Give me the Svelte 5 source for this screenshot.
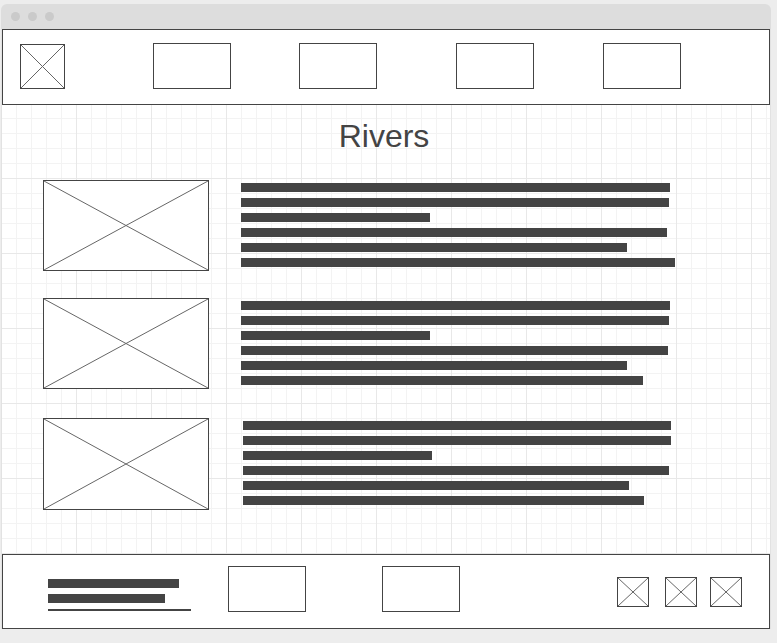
<script>
  const links = ['One', 'Two', 'Three', 'Four'];
  const footerLinks = ['About', 'Contact'];
  const socials = ['First', 'Second', 'Third'];
  // Line lengths, in percent of the text column
  const rows = [
    { tall: false, lines: [85.8, 85.6, 37.8, 85.2, 77.2, 86.8] },
    { tall: false, lines: [85.8, 85.6, 37.8, 85.4, 77.2, 80.4] },
    { tall: true, lines: [85.9, 85.9, 38, 85.5, 77.5, 80.5] }
  ];
</script>

{#snippet cross()}
  <svg viewBox="0 0 100 100" preserveAspectRatio="none" aria-hidden="true">
    <path d="M0 0L100 100M100 0L0 100" vector-effect="non-scaling-stroke" />
  </svg>
{/snippet}

<div class="window">
  <div class="titlebar"><i></i><i></i><i></i></div>
  <div class="page">
    <header>
      <a class="frame logo" href="#home" aria-label="Home">{@render cross()}</a>
      {#each links as link}
        <a class="frame box" href="#{link}" aria-label={link}></a>
      {/each}
    </header>

    <main>
      <h1>Rivers</h1>
      {#each rows as row}
        <article class:tall={row.tall}>
          <div class="frame picture">{@render cross()}</div>
          <div class="lines">
            {#each row.lines as width}
              <div class="bar" style="width: {width}%"></div>
            {/each}
          </div>
        </article>
      {/each}
    </main>

    <footer>
      <div class="note">
        <div class="bar first"></div>
        <div class="bar second"></div>
        <div class="rule"></div>
      </div>
      {#each footerLinks as link}
        <a class="frame box" href="#{link}" aria-label={link}></a>
      {/each}
      {#each socials as social}
        <a class="frame social" href="#{social}" aria-label={social}>{@render cross()}</a>
      {/each}
    </footer>
  </div>
</div>

<style>
  :global(body) {
    margin: 0;
    background: #ededed;
  }
  .window {
    box-sizing: border-box;
    padding: 4px 6px 14px 1px;
    font-family: "Liberation Sans", Arial, sans-serif;
    color: #444;
  }
  .titlebar {
    display: flex;
    align-items: center;
    gap: 8px;
    height: 25px;
    padding-left: 10px;
    border-radius: 6px 6px 0 0;
    background: #ddd;
  }
  .titlebar i {
    width: 9px;
    height: 9px;
    border-radius: 50%;
    background: #cacaca;
  }
  .page {
    border: solid #e2e2e2;
    border-width: 0 1px;
  }
  header,
  footer {
    display: grid;
    align-items: start;
    box-sizing: border-box;
    border: 1px solid #444;
    background: #fff;
  }
  header {
    grid-template-columns: 133fr 146fr 157fr 147fr 166fr;
    height: 76px;
    padding: 13px 0 0 17px;
  }
  .frame {
    display: block;
    box-sizing: border-box;
    border: 1px solid #444;
    background: #fff;
  }
  .frame svg {
    display: block;
    width: 100%;
    height: 100%;
  }
  .frame path {
    fill: none;
    stroke: #666;
    stroke-width: 1px;
  }
  .logo {
    width: 45px;
    height: 45px;
    margin-top: 1px;
  }
  .box {
    width: 78px;
    height: 46px;
  }
  main {
    padding: 13px 29px 44px 41px;
    background-color: #fff;
    background-image:
      linear-gradient(90deg, #e8e8e8 1px, transparent 1px),
      linear-gradient(#e8e8e8 1px, transparent 1px),
      linear-gradient(90deg, #f3f3f3 1px, transparent 1px),
      linear-gradient(#f3f3f3 1px, transparent 1px);
    background-size: 75px 75px, 75px 75px, 15px 15px, 15px 15px;
    background-position: -1px -2px;
  }
  h1 {
    margin: 0 16px 26px 0;
    font-size: 32px;
    font-weight: 400;
    line-height: 36px;
    text-align: center;
  }
  article {
    display: grid;
    grid-template-columns: 166px 1fr;
    column-gap: 32px;
  }
  article + article {
    margin-top: 27px;
  }
  article.tall {
    column-gap: 34px;
    margin-top: 29px;
  }
  .picture {
    height: 91px;
  }
  .tall .picture {
    height: 92px;
  }
  .lines,
  .note {
    display: flex;
    flex-direction: column;
    gap: 6px;
  }
  .lines {
    padding-top: 3px;
  }
  .bar {
    height: 9px;
    background: #444;
  }
  footer {
    grid-template-columns: 180fr 154fr 235fr 48fr 45fr 59fr;
    height: 75px;
    padding: 11px 0 0 45px;
  }
  .note {
    padding-top: 13px;
  }
  .first {
    width: 131px;
  }
  .second {
    width: 117px;
  }
  .rule {
    width: 143px;
    height: 2px;
    background: #444;
  }
  .social {
    width: 32px;
    height: 30px;
    margin-top: 11px;
  }
</style>
